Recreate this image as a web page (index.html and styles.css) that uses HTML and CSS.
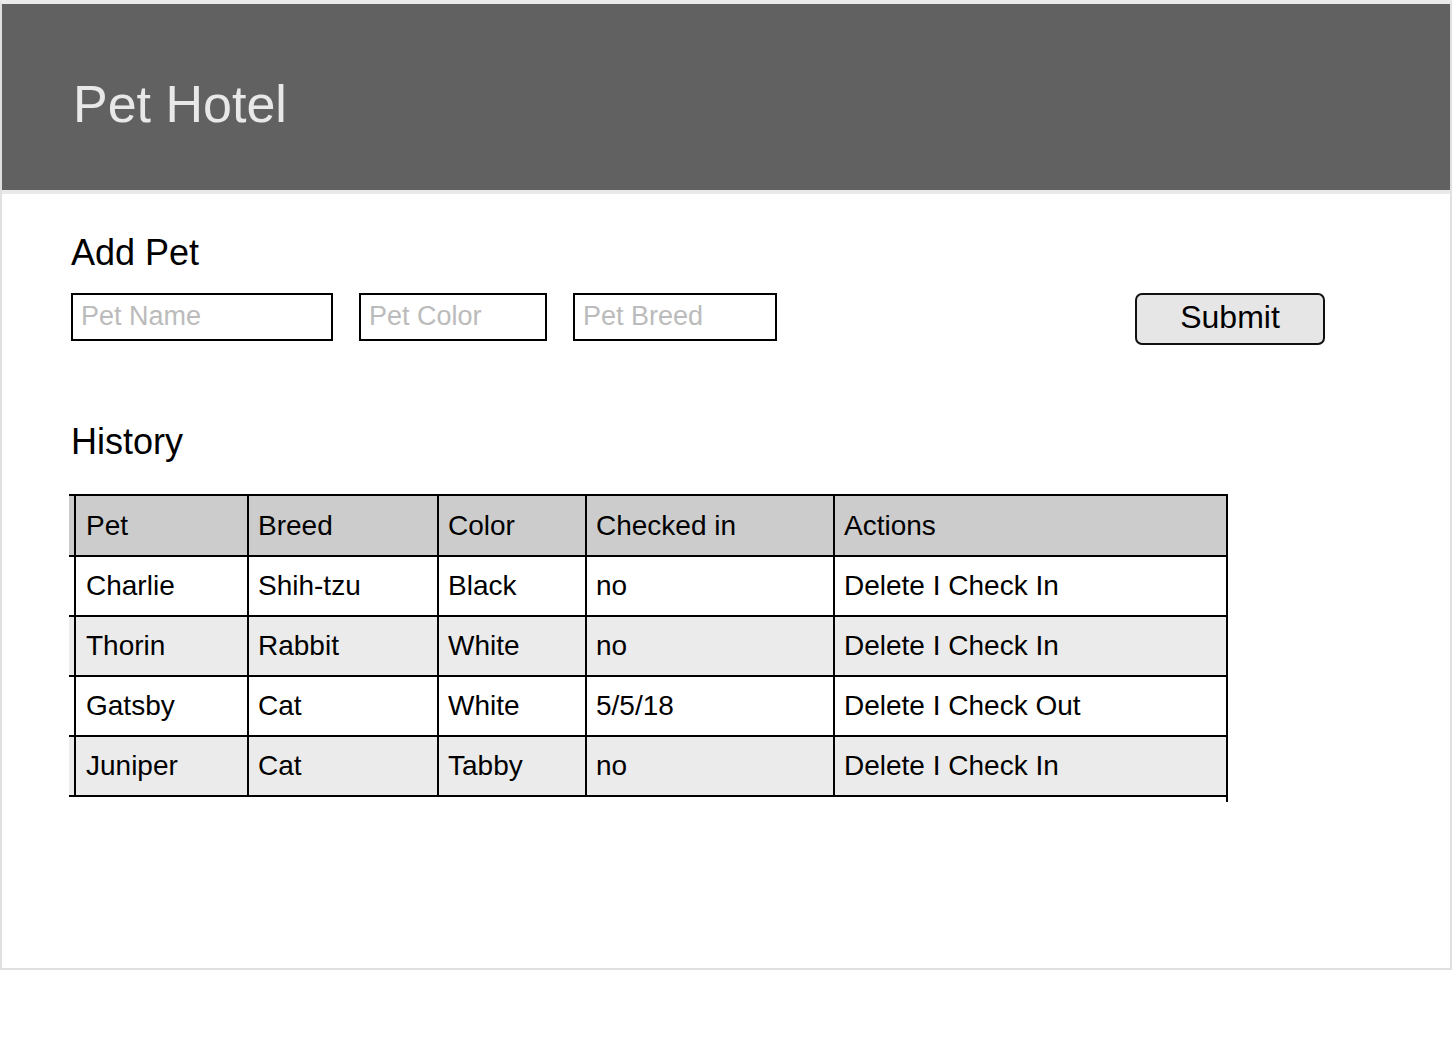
FILE: index.html
```html
<!DOCTYPE html>
<html lang="en">
<head>
<meta charset="utf-8">
<title>Pet Hotel</title>
<link rel="stylesheet" href="styles.css">
</head>
<body>
<div class="frame">
  <header class="topbar">
    <h1 class="title">Pet Hotel</h1>
  </header>
  <main class="content">
    <h2 class="section-title">Add Pet</h2>
    <form class="pet-form">
      <input class="field field-name" type="text" placeholder="Pet Name">
      <input class="field field-color" type="text" placeholder="Pet Color">
      <input class="field field-breed" type="text" placeholder="Pet Breed">
      <button class="submit" type="button">Submit</button>
    </form>
    <h2 class="section-title history-title">History</h2>
    <table class="history">
      <colgroup>
        <col class="c-spacer">
        <col class="c-pet">
        <col class="c-breed">
        <col class="c-color">
        <col class="c-checked">
        <col class="c-actions">
      </colgroup>
      <thead>
        <tr class="head-row">
          <th class="spacer"></th>
          <th class="first">Pet</th>
          <th>Breed</th>
          <th>Color</th>
          <th>Checked in</th>
          <th>Actions</th>
        </tr>
      </thead>
      <tbody>
        <tr>
          <td class="spacer"></td>
          <td class="first">Charlie</td>
          <td>Shih-tzu</td>
          <td>Black</td>
          <td>no</td>
          <td>Delete I Check In</td>
        </tr>
        <tr class="alt">
          <td class="spacer"></td>
          <td class="first">Thorin</td>
          <td>Rabbit</td>
          <td>White</td>
          <td>no</td>
          <td>Delete I Check In</td>
        </tr>
        <tr>
          <td class="spacer"></td>
          <td class="first">Gatsby</td>
          <td>Cat</td>
          <td>White</td>
          <td>5/5/18</td>
          <td>Delete I Check Out</td>
        </tr>
        <tr class="alt">
          <td class="spacer"></td>
          <td class="first">Juniper</td>
          <td>Cat</td>
          <td>Tabby</td>
          <td>no</td>
          <td class="last-cell">Delete I Check In</td>
        </tr>
      </tbody>
    </table>
  </main>
</div>
</body>
</html>
```

FILE: styles.css
```css
* {
  box-sizing: border-box;
}

html, body {
  margin: 0;
  padding: 0;
  background: #ffffff;
}

body {
  font-family: "Liberation Sans", Arial, Helvetica, sans-serif;
  color: #000000;
}

.frame {
  width: 1452px;
  height: 970px;
  border: 2px solid #e0e0e0;
  border-top: 4px solid #ebebeb;
  box-shadow: 0 3px 0 #eeeeee;
  display: flex;
  flex-direction: column;
}

.topbar {
  height: 190px;
  flex: 0 0 190px;
  background: #616161;
  border-bottom: 4px solid #e9e9e9;
  padding: 74px 0 0 71px;
}

.title {
  margin: 0;
  font-size: 52px;
  line-height: 52px;
  font-weight: normal;
  color: #e8e8e8;
}

.content {
  flex: 1;
  padding: 41px 0 0 69px;
}

.section-title {
  margin: 0;
  font-size: 36px;
  line-height: 36px;
  font-weight: normal;
  color: #000000;
}

.pet-form {
  margin: 22px 0 0 0;
  width: 1254px;
  height: 52px;
  display: flex;
  align-items: flex-start;
  gap: 26px;
}

.field {
  height: 48px;
  border: 2px solid #000000;
  border-radius: 0;
  padding: 0 0 2px 8px;
  font-family: "Liberation Sans", Arial, Helvetica, sans-serif;
  font-size: 27px;
  color: #000000;
  background: #ffffff;
  outline: none;
}

.field::placeholder {
  color: #bbbbbb;
  opacity: 1;
}

.field-name {
  width: 262px;
}

.field-color {
  width: 188px;
}

.field-breed {
  width: 204px;
}

.submit {
  margin-left: auto;
  width: 190px;
  height: 52px;
  border: 2px solid #111111;
  border-radius: 7px;
  background: #e6e6e6;
  font-family: "Liberation Sans", Arial, Helvetica, sans-serif;
  font-size: 32px;
  color: #000000;
  padding: 0 0 4px 0;
}

.history-title {
  margin-top: 79px;
}

.history {
  margin: 34px 0 0 -2px;
  width: 1159px;
  table-layout: fixed;
  border-collapse: separate;
  border-spacing: 0;
  font-size: 28px;
}

.c-spacer { width: 5px; }
.c-pet { width: 175px; }
.c-breed { width: 190px; }
.c-color { width: 148px; }
.c-checked { width: 248px; }
.c-actions { width: 393px; }

.history th,
.history td {
  height: 60px;
  padding: 0 0 0 9px;
  text-align: left;
  font-weight: normal;
  line-height: 58px;
  white-space: nowrap;
  border-bottom: 2px solid #000000;
  border-right: 2px solid #000000;
  color: #000000;
}

.history th {
  height: 63px;
  border-top: 2px solid #000000;
  line-height: 59px;
}

.history .spacer {
  padding: 0;
  border-right: none;
}

.history .first {
  border-left: 2px solid #000000;
  padding-left: 10px;
}

.head-row {
  background: #cccccc;
}

.alt {
  background: #ebebeb;
}

.history .last-cell {
  position: relative;
}

.history .last-cell::after {
  content: "";
  position: absolute;
  right: -2px;
  bottom: -7px;
  width: 2px;
  height: 5px;
  background: #000000;
}
```
